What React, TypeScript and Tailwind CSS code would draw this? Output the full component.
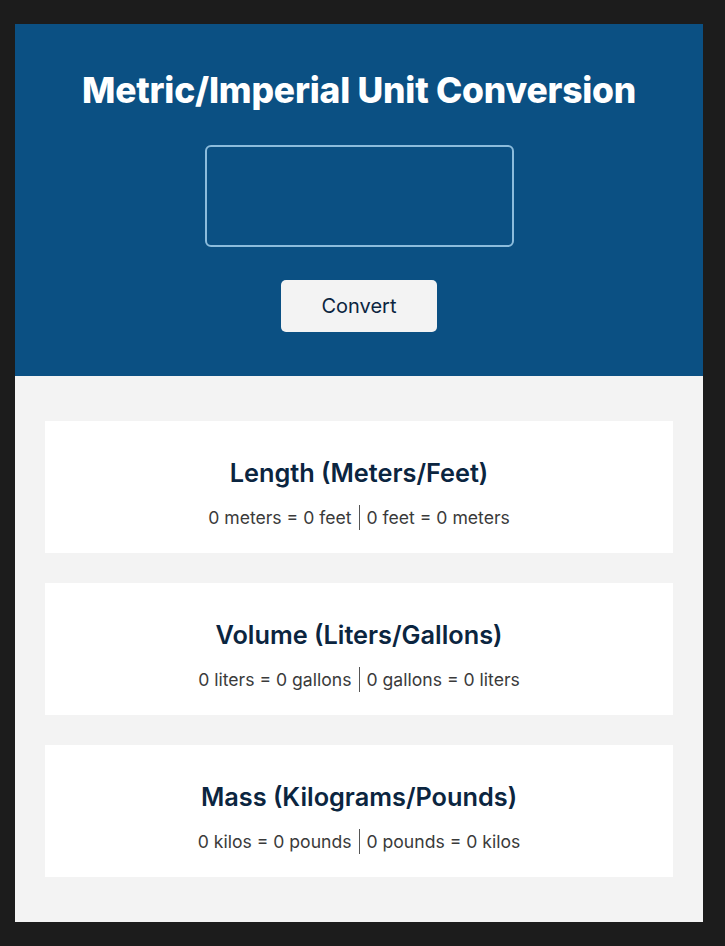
import React from "react";

const cards = [
  { title: "Length (Meters/Feet)", a: "0 meters = 0 feet", b: "0 feet = 0 meters" },
  { title: "Volume (Liters/Gallons)", a: "0 liters = 0 gallons", b: "0 gallons = 0 liters" },
  { title: "Mass (Kilograms/Pounds)", a: "0 kilos = 0 pounds", b: "0 pounds = 0 kilos" },
];

export default function App() {
  return (
    <div
      className="min-h-[946px] bg-[#1c1c1c] pl-[15px] pt-[24px] pb-[24px] w-[725px]"
      style={{ fontFamily: "Inter, 'Noto Sans', sans-serif" }}
    >
      <div className="w-[688px]">
        <div className="bg-[#0b5083] h-[352px] flex flex-col items-center pt-[44px]">
          <h1 className="text-white font-extrabold text-[35.4px] leading-[46px] tracking-[-0.2px]">
            Metric/Imperial Unit Conversion
          </h1>
          <input
            type="text"
            className="mt-[31px] w-[309px] h-[102px] rounded-[6px] border-2 border-[#8cbcdc] bg-transparent outline-none"
          />
          <button className="mt-[33px] w-[156px] h-[52px] rounded-[5px] bg-[#f3f3f3] text-[#0b2540] text-[20px]">
            Convert
          </button>
        </div>
        <div className="bg-[#f3f3f3] h-[546px] px-[30px] pt-[45px] flex flex-col gap-[30px]">
          {cards.map((c) => (
            <div key={c.title} className="bg-white h-[132px] flex flex-col items-center pt-[37px]">
              <h2 className="text-[#0b2540] text-[25.3px] font-semibold leading-[30px]">{c.title}</h2>
              <p className="mt-[17px] text-[#3a3a3a] text-[17.6px] leading-[24px] flex items-center">
                <span>{c.a}</span>
                <span className="mx-[7px] inline-block w-[1px] h-[25px] bg-[#555]" />
                <span>{c.b}</span>
              </p>
            </div>
          ))}
        </div>
      </div>
    </div>
  );
}
